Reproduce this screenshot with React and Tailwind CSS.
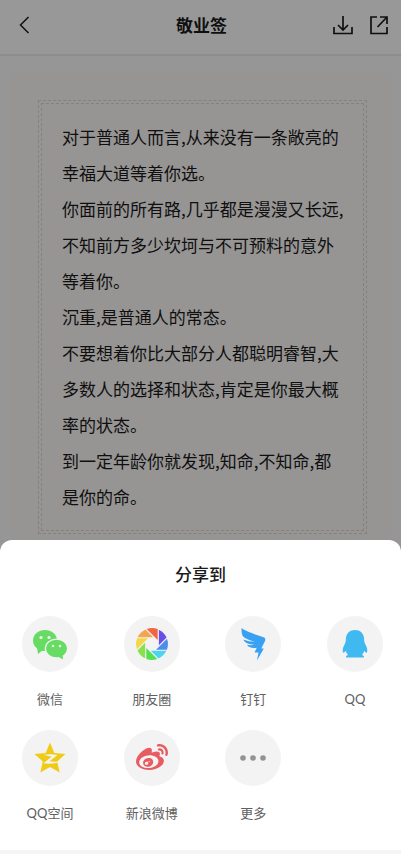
import { FaWeibo } from "react-icons/fa";

const quote = [
  "对于普通人而言,从来没有一条敞亮的幸福大道等着你选。",
  "你面前的所有路,几乎都是漫漫又长远,不知前方多少坎坷与不可预料的意外等着你。",
  "沉重,是普通人的常态。",
  "不要想着你比大部分人都聪明睿智,大多数人的选择和状态,肯定是你最大概率的状态。",
  "到一定年龄你就发现,知命,不知命,都是你的命。",
];

function WechatIcon() {
  return (
    <svg viewBox="0 0 36 36" className="size-9" aria-hidden="true">
      <g fill="#66dc62">
        <ellipse cx="13" cy="14.5" rx="12" ry="10.5" />
        <path d="M5 21L6 28L12 23Z" />
      </g>
      <ellipse cx="24.5" cy="22.5" rx="11.8" ry="10" fill="#f3f3f3" />
      <g fill="#66dc62">
        <ellipse cx="24.5" cy="22.5" rx="10.5" ry="8.8" />
        <path d="M25 30L31 33.5L30.5 28Z" />
      </g>
      <g fill="#f3f3f3">
        <circle cx="9" cy="11.5" r="1.6" />
        <circle cx="17" cy="11.5" r="1.6" />
        <circle cx="21" cy="20" r="1.3" />
        <circle cx="28" cy="20" r="1.3" />
      </g>
    </svg>
  );
}

const blades = ["#f0673f", "#6750e8", "#4b8fea", "#4cd5ee", "#55e052", "#8be04e", "#f3d748", "#f2a653"];

function MomentsIcon() {
  return (
    <svg viewBox="-18 -18 36 36" className="size-9" aria-hidden="true">
      {blades.map((color, i) => (
        <path
          key={color}
          d="M-5.3 -15A16 16 0 0 1 5.7 -14.9L5.7 -4Z"
          fill={color}
          transform={`rotate(${i * 45})`}
        />
      ))}
    </svg>
  );
}

function DingTalkIcon() {
  return (
    <svg viewBox="0 0 36 36" className="size-9" fill="#38a1f3" aria-hidden="true">
      <path d="M6.5 2C12 6 21 8.5 28.500 11.3C30.3 12 30.7 13 30 15L26.3 22.5H28.8L22 34.5L23.5 26.5H19.5L21.800 21.7C17 22.5 13.5 21.5 12 18.8C14.5 19.5 17.5 19.3 19.5 18.8C13.5 18.5 9.5 16.8 8.5 13.5C12 15 16 15.7 20 15.7C12.5 13.8 7.5 11.5 7 8C6.7 6 6.3 4 6.5 2Z" />
    </svg>
  );
}

function QqIcon() {
  return (
    <svg viewBox="0 0 36 36" className="size-9" fill="#40b9f1" aria-hidden="true">
      <path d="M18 4C11.5 4 8.8 8.5 8.8 14.5C8.8 17 7 19 6.2 21.5C5.3 24.5 5.7 26.7 6.5 26.7C7.5 26.7 8.3 25.5 8.8 24.8C9.1 26.5 10 28 11 29C9.3 29.5 8.6 30.5 9.2 31.5H26.8C27.4 30.5 26.7 29.5 25 29C26 28 26.9 26.5 27.2 24.8C27.7 25.5 28.5 26.7 29.5 26.7C30.3 26.7 30.7 24.5 29.8 21.5C29 19 27.2 17 27.2 14.5C27.2 8.5 24.5 4 18 4Z" />
    </svg>
  );
}

function QzoneIcon() {
  return (
    <svg viewBox="0 0 36 36" className="size-9" aria-hidden="true">
      <path
        d="M18 2.5L22.3 13L33.5 14L25.2 21.5L27.7 32.5L18 27L8.3 32.5L10.8 21.5L2.5 14L13.7 13Z"
        fill="#efcb16"
      />
      <path
        d="M11.5 14.8C16 14 21 14 25.5 15L17.5 21.3C21 21.9 25 21.9 28 21.5C24 23.7 17 24.3 11.5 23.3L19.5 16.7C17 16 14 15.5 11.5 14.8Z"
        fill="#f3f3f3"
      />
    </svg>
  );
}

function MoreIcon() {
  return (
    <svg viewBox="0 0 36 36" className="size-9" fill="#929292" aria-hidden="true">
      <circle cx="8" cy="18" r="2.8" />
      <circle cx="18" cy="18" r="2.8" />
      <circle cx="28" cy="18" r="2.8" />
    </svg>
  );
}

const targets = [
  { label: "微信", icon: <WechatIcon /> },
  { label: "朋友圈", icon: <MomentsIcon /> },
  { label: "钉钉", icon: <DingTalkIcon /> },
  { label: "QQ", icon: <QqIcon /> },
  { label: "QQ空间", icon: <QzoneIcon /> },
  { label: "新浪微博", icon: <FaWeibo className="size-8 text-[#e85b61]" /> },
  { label: "更多", icon: <MoreIcon /> },
];

function Header() {
  return (
    <header className="grid h-14 grid-cols-[1fr_auto_1fr] items-center border-b-2 border-[#ebebeb] bg-[#fdfdfd] pr-2.5 pb-1 pl-3">
      <button type="button" aria-label="返回" className="flex size-6 items-center justify-center">
        <svg viewBox="0 0 24 24" className="size-6" fill="none" stroke="currentColor" strokeWidth="1.5">
          <path d="M16.5 4L8.5 12L16.5 20" />
        </svg>
      </button>
      <h1 className="text-[17px] font-bold">敬业签</h1>
      <div className="flex justify-end gap-3">
        <button type="button" aria-label="下载" className="size-6">
          <svg viewBox="0 0 24 24" className="size-6" fill="none" stroke="currentColor" strokeWidth="1.7">
            <path d="M12 3V17M7 12L12 17L17 12M3 14V20.5H21V14" />
          </svg>
        </button>
        <button type="button" aria-label="分享" className="size-6">
          <svg viewBox="0 0 24 24" className="size-6" fill="none" stroke="currentColor" strokeWidth="1.7">
            <path d="M10 4H4V20.5H20V14M13 4H20V11M20 4L10.5 14" />
          </svg>
        </button>
      </div>
    </header>
  );
}

function ShareSheet() {
  return (
    <section
      role="dialog"
      aria-label="分享到"
      className="fixed inset-x-0 bottom-0 rounded-t-xl border-b-4 border-[#f5f5f5] bg-white pt-[18px] pb-[25px]"
    >
      <h2 className="text-center text-[17px] leading-8 font-medium">分享到</h2>
      <div className="mt-[26px] grid grid-cols-[repeat(4,56px)] justify-between gap-y-[19px] pr-[18px] pl-[22px]">
        {targets.map((t) => (
          <button key={t.label} type="button" className="flex flex-col items-center gap-[15px]">
            <span className="flex size-14 items-center justify-center rounded-full bg-[#f3f3f3]">{t.icon}</span>
            <span className="font-[Lato,'Noto_Sans_CJK_SC',sans-serif] text-[13px] leading-6 whitespace-nowrap text-[#606060]">
              {t.label}
            </span>
          </button>
        ))}
      </div>
    </section>
  );
}

export default function App() {
  return (
    <div className="min-h-screen bg-[#fbfbfb] font-['Noto_Sans_CJK_SC',sans-serif] text-[#1a1a1a]">
      <Header />
      <main className="px-2.5 pt-4">
        <article className="bg-[#faf8f7] pt-7 pr-6 pb-20 pl-7">
          <div className="border border-dashed border-[#dcd7d4] p-0.5">
            <div className="border border-dashed border-[#dcd7d4] py-[15px] pr-4 pl-5 text-[17px] leading-9">
              {quote.map((line) => (
                <p key={line}>{line}</p>
              ))}
            </div>
          </div>
        </article>
      </main>
      <div className="fixed inset-0 bg-black/40" />
      <ShareSheet />
    </div>
  );
}
